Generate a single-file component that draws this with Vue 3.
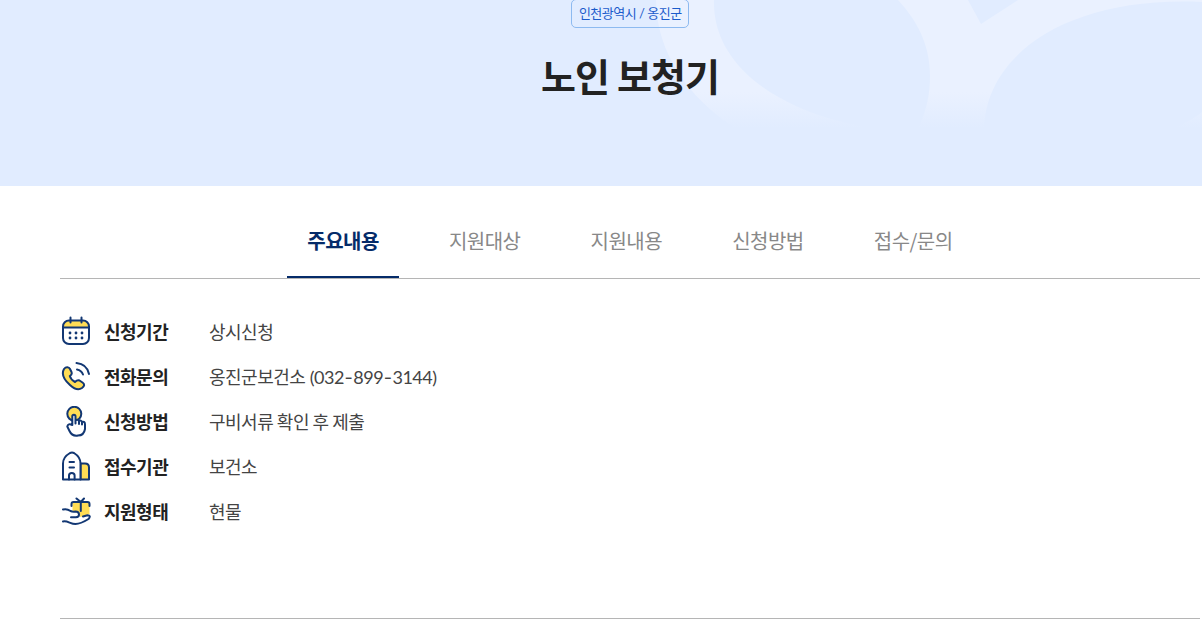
<template>
  <div class="page">
    <header class="hero">
      <svg class="hero-pattern" width="562" height="128" viewBox="640 0 562 128" fill="none">
        <defs>
          <linearGradient id="fade" x1="0" y1="92" x2="0" y2="128" gradientUnits="userSpaceOnUse">
            <stop offset="0" stop-color="#e1ecff" stop-opacity="0" />
            <stop offset="1" stop-color="#e1ecff" />
          </linearGradient>
        </defs>
        <path fill="#eaf1ff" fill-rule="evenodd" d="M656 0C656 55 693 104 742 132H1202V0H1018L981 24L968 0ZM714 0H898C920 24 930 48 930 76C930 96 926 112 917 132H900C795 122 712 74 714 0ZM1202 2V112Q1190 122 1165 132H984C984 54 1068 -4 1202 2Z" />
        <rect x="640" y="92" width="562" height="36" fill="url(#fade)" />
      </svg>
      <span class="region">인천광역시 / 옹진군</span>
      <h1 class="title">노인 보청기</h1>
    </header>

    <main class="content">
      <nav class="tabs">
        <button
          v-for="tab in tabs"
          :key="tab"
          type="button"
          class="tab"
          :class="{ active: tab === activeTab }"
          @click="activeTab = tab"
        >{{ tab }}</button>
      </nav>

      <ul class="summary">
        <li v-for="item in items" :key="item.label" class="summary-item">
          <svg class="icon" viewBox="0 0 32 32" width="32" height="32">
            <g v-if="item.icon === 'calendar'">
              <path class="fill" d="M3 12V10Q3 4.500 8 4.500H24Q29 4.500 29 10V12Z" />
              <rect class="line" x="3" y="4.500" width="26" height="23.500" rx="6" />
              <path class="line" d="M3 11.500H29M10.500 1.500V6.500M21.500 1.500V6.500" />
              <path class="dots" d="M10 17h.01M16 17h.01M22 17h.01M10 22h.01M16 22h.01M22 22h.01" />
            </g>
            <g v-else-if="item.icon === 'phone'">
              <path class="fill line" d="M4 8C6 5.500 9 6 10 8L11.500 11Q12.500 13.500 9.800 15Q11 19 15 21Q17.500 18.500 19.500 19.500L22.500 21.500Q26 24 22 27Q17 30.500 10 24Q0 15 4 8Z" />
              <path class="line" d="M17 8.500Q21.500 9.500 23 13.500M16.500 2Q27 3 29 13" />
            </g>
            <g v-else-if="item.icon === 'touch'">
              <circle class="fill line" cx="14.300" cy="7.800" r="7" />
              <path class="line white" d="M12.300 19V10.500Q12.300 8.800 13.900 8.800T15.500 10.500V14.500Q17.500 13 19 15Q21 13.700 22 16Q25 15 25 18.500V23Q24 29.500 18 29.500Q12 30.500 9.500 25L7.300 20.500Q8 17 12.300 19M15.500 14.500V17.500M19 15V18M22 16V18.500" />
            </g>
            <g v-else-if="item.icon === 'building'">
              <path class="fill line" d="M20.500 12.500H25Q29 12.500 29 16.500V28.500H20.500Z" />
              <path class="line white" d="M3 28.500V12.500Q3 6 10 2Q12 1 14 2Q20.500 6 20.500 12.500V28.500Z" />
              <path class="line" d="M9.500 11H14M9.500 16.500H14M9 28.500V24.500Q9 22 11.800 22T14.600 24.500V28.500" />
            </g>
            <g v-else transform="translate(.5 1)">
              <path class="fill" d="M12 6H29V17L20 20L16 15L12 14Z" />
              <path class="line" d="M11 9V7Q11 5 13 5H27Q29 5 29 7V9M20.300 5V14M16 1.500L20.300 5L23.500 1.500" />
              <path class="line" d="M2.500 12.500C6 11.500 8 12.500 10 14Q12 15 15 14.500Q18.500 14.500 18.500 17.500Q18.500 20.300 15.500 20.300H10.500M2.500 24.500C7 23.500 10 27 15 27C20 27 24 24.500 28 22Q31 18.500 27 18.200L22.500 19.500" />
            </g>
          </svg>
          <strong class="label">{{ item.label }}</strong>
          <span v-if="item.phone" class="value phone">{{ item.value }} (<template v-for="(part, i) in item.phone.split('-')" :key="i"><span v-if="i > 0" class="hyphen">-</span>{{ part }}</template>)</span>
          <span v-else class="value">{{ item.value }}</span>
        </li>
      </ul>
    </main>
  </div>
</template>

<script setup>
import { ref } from 'vue'

const tabs = ['주요내용', '지원대상', '지원내용', '신청방법', '접수/문의']
const activeTab = ref('주요내용')

const items = [
  { icon: 'calendar', label: '신청기간', value: '상시신청' },
  { icon: 'phone', label: '전화문의', value: '옹진군보건소', phone: '032-899-3144' },
  { icon: 'touch', label: '신청방법', value: '구비서류 확인 후 제출' },
  { icon: 'building', label: '접수기관', value: '보건소' },
  { icon: 'gift', label: '지원형태', value: '현물' }
]
</script>

<style>
body {
  margin: 0;
  background: #fff;
  overflow: hidden;
}
</style>

<style scoped>
.page {
  height: 634px;
  overflow: hidden;
  font-family: Lato, 'Noto Sans CJK KR', sans-serif;
  letter-spacing: -0.5px;
  color: #222;
}

.hero {
  position: relative;
  display: flex;
  flex-direction: column;
  align-items: center;
  height: 186px;
  padding-left: 58px;
  box-sizing: border-box;
  background: #e1ecff;
}

.hero-pattern {
  position: absolute;
  top: 0;
  right: 0;
}

.region {
  position: relative;
  box-sizing: border-box;
  height: 29px;
  margin-top: -1px;
  padding: 0 6.5px 0 7px;
  border: 1px solid #8dbaf0;
  border-radius: 5px;
  font-size: 13px;
  line-height: 26px;
  color: #1b5bcb;
}

.title {
  position: relative;
  margin: 20px 0 0;
  font-size: 38px;
  line-height: 56px;
  font-weight: 700;
  letter-spacing: -1px;
}

.content {
  width: 1140px;
  margin-left: 60px;
}

.tabs {
  display: flex;
  justify-content: center;
  gap: 30px;
  height: 93px;
  box-sizing: border-box;
  padding-top: 20px;
  border-bottom: 1px solid #b5b5b5;
}

.tab {
  box-sizing: border-box;
  height: 72px;
  padding: 0 20px 1px;
  border: 0;
  border-bottom: 2px solid transparent;
  background: none;
  font: inherit;
  font-family: 'Noto Sans CJK KR', sans-serif;
  font-size: 20px;
  letter-spacing: inherit;
  color: #888;
  cursor: pointer;
}

.tab.active {
  border-bottom-color: #052b69;
  color: #052b69;
  font-weight: 700;
}

.summary {
  display: flex;
  flex-direction: column;
  gap: 13px;
  height: 340px;
  box-sizing: border-box;
  margin: 0;
  padding: 37px 0 0;
  border-bottom: 1px solid #b5b5b5;
  list-style: none;
}

.summary-item {
  display: flex;
  align-items: center;
  height: 32px;
  font-size: 18px;
  line-height: 32px;
}

.icon {
  margin-right: 12px;
}

.label {
  width: 105px;
  font-weight: 700;
}

.value {
  color: #444;
  word-spacing: -0.5px;
}

.value.phone {
  word-spacing: 0.3px;
}

.hyphen {
  margin-left: 0.7px;
  font-family: Inter, sans-serif;
  letter-spacing: 0.4px;
}

.line {
  fill: none;
  stroke: #123773;
  stroke-width: 2;
  stroke-linecap: round;
  stroke-linejoin: round;
}

.fill {
  fill: #ffdd55;
}

.white {
  fill: #fff;
}

.dots {
  fill: none;
  stroke: #123773;
  stroke-width: 2.8;
  stroke-linecap: round;
}
</style>
